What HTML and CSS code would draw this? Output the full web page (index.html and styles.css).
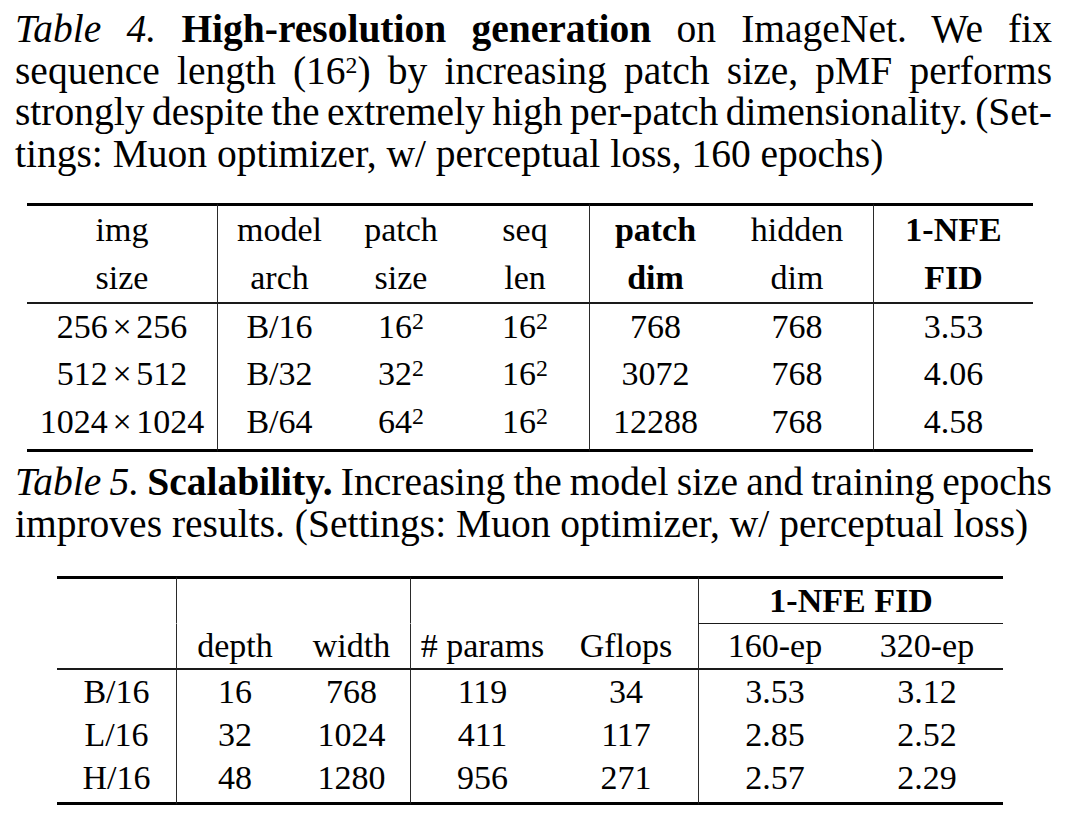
FILE: index.html
```html
<!DOCTYPE html>
<html lang="en">
<head>
<meta charset="utf-8">
<title>Tables 4 and 5</title>
<link rel="stylesheet" href="styles.css">
</head>
<body>
<div class="page">
  <p class="caption cap4">
    <span class="ln j"><i>Table 4.</i> <b>High-resolution generation</b> on ImageNet. We fix</span>
    <span class="ln j">sequence length (16<sup class="csup">2</sup>) by increasing patch size, pMF performs</span>
    <span class="ln j tight">strongly despite the extremely high per-patch dimensionality. (Set-</span>
    <span class="ln">tings: Muon optimizer, w/ perceptual loss, 160 epochs)</span>
  </p>

  <table class="tab t4">
    <colgroup>
      <col class="w190"><col class="w124"><col class="w120"><col class="w128"><col class="w132"><col class="w152"><col class="w160">
    </colgroup>
    <thead>
      <tr class="h1">
        <th>img</th><th class="vl">model</th><th>patch</th><th>seq</th><th class="vl bold">patch</th><th>hidden</th><th class="vl bold">1-NFE</th>
      </tr>
      <tr class="h2">
        <th>size</th><th class="vl">arch</th><th>size</th><th>len</th><th class="vl bold">dim</th><th>dim</th><th class="vl bold">FID</th>
      </tr>
    </thead>
    <tbody>
      <tr class="r1">
        <td>256<span class="x">×</span>256</td><td class="vl">B/16</td><td>16<sup class="tsup">2</sup></td><td>16<sup class="tsup">2</sup></td><td class="vl">768</td><td>768</td><td class="vl">3.53</td>
      </tr>
      <tr class="r2">
        <td>512<span class="x">×</span>512</td><td class="vl">B/32</td><td>32<sup class="tsup">2</sup></td><td>16<sup class="tsup">2</sup></td><td class="vl">3072</td><td>768</td><td class="vl">4.06</td>
      </tr>
      <tr class="r3">
        <td>1024<span class="x">×</span>1024</td><td class="vl">B/64</td><td>64<sup class="tsup">2</sup></td><td>16<sup class="tsup">2</sup></td><td class="vl">12288</td><td>768</td><td class="vl">4.58</td>
      </tr>
    </tbody>
  </table>

  <p class="caption cap5">
    <span class="ln j tight"><i>Table 5.</i> <b>Scalability.</b> Increasing the model size and training epochs</span>
    <span class="ln">improves results. (Settings: Muon optimizer, w/ perceptual loss)</span>
  </p>

  <table class="tab t5">
    <colgroup>
      <col class="w119"><col class="w117"><col class="w117"><col class="w144"><col class="w144"><col class="w153"><col class="w152">
    </colgroup>
    <thead>
      <tr class="h1">
        <th></th><th class="vl"></th><th></th><th class="vl"></th><th></th><th class="vl bold cmid" colspan="2">1-NFE FID</th>
      </tr>
      <tr class="h2">
        <th></th><th class="vl">depth</th><th>width</th><th class="vl"># params</th><th>Gflops</th><th class="vl">160-ep</th><th>320-ep</th>
      </tr>
    </thead>
    <tbody>
      <tr class="r1">
        <td>B/16</td><td class="vl">16</td><td>768</td><td class="vl">119</td><td>34</td><td class="vl">3.53</td><td>3.12</td>
      </tr>
      <tr class="r2">
        <td>L/16</td><td class="vl">32</td><td>1024</td><td class="vl">411</td><td>117</td><td class="vl">2.85</td><td>2.52</td>
      </tr>
      <tr class="r3">
        <td>H/16</td><td class="vl">48</td><td>1280</td><td class="vl">956</td><td>271</td><td class="vl">2.57</td><td>2.29</td>
      </tr>
    </tbody>
  </table>
</div>
</body>
</html>
```

FILE: styles.css
```css
html, body {
  margin: 0;
  padding: 0;
  background: #ffffff;
}

body {
  color: #000000;
  font-family: "Liberation Serif", "Times New Roman", Times, serif;
}

.page {
  padding: 9px 0 0 15px;
  width: 1037px;
}

/* ---------- captions ---------- */
.caption {
  margin: 0;
  font-size: 39.5px;
  line-height: 41.5px;
}

.ln {
  display: block;
}

.j {
  text-align: justify;
  text-align-last: justify;
}

.tight {
  word-spacing: -0.11em;
}

.caption b {
  font-weight: bold;
}

.csup {
  font-size: 0.6em;
  vertical-align: 0.46em;
  line-height: 0;
}

.cap5 {
  margin-top: 9px;
  line-height: 42px;
}

/* ---------- tables ---------- */
.tab {
  border-collapse: separate;
  border-spacing: 0;
  table-layout: fixed;
  font-size: 34px;
}

.tab th,
.tab td {
  padding: 0;
  text-align: center;
  vertical-align: middle;
  font-weight: normal;
  white-space: nowrap;
}

.tab .bold {
  font-weight: bold;
}

.tab .vl {
  border-left: 1px solid #2a2a2a;
}

.tab thead tr.h1 th {
  border-top: 3px solid #000;
}

.tab tbody tr.r3 td {
  border-bottom: 3px solid #000;
}

.tsup {
  font-size: 0.7em;
  vertical-align: 0.36em;
  line-height: 0;
}

.x {
  margin: 0 0.14em;
}

/* table 4 */
.t4 {
  margin: 28px 0 0 12px;
  width: 1006px;
}

.t4 .h1 th { line-height: 47px; }
.t4 .h2 th { line-height: 49px; border-bottom: 2px solid #1a1a1a; }
.t4 .r1 td { line-height: 46px; }
.t4 .r2 td { line-height: 48px; }
.t4 .r3 td { line-height: 48px; padding-bottom: 3px; }

.w190 { width: 190px; }
.w124 { width: 124px; }
.w120 { width: 120px; }
.w128 { width: 128px; }
.w132 { width: 132px; }
.w152 { width: 152px; }
.w160 { width: 160px; }

/* table 5 */
.t5 {
  margin: 31px 0 0 42px;
  width: 946px;
}

.t5 .h1 th { line-height: 44px; border-bottom: 1px solid transparent; }
.t5 .h1 th.cmid { border-bottom: 1px solid #1a1a1a; }
.t5 .h2 th { line-height: 44px; border-bottom: 2px solid #1a1a1a; }
.t5 .r1 td { line-height: 43px; }
.t5 .r2 td { line-height: 43px; }
.t5 .r3 td { line-height: 43px; padding-bottom: 3px; }

.w119 { width: 119px; }
.w117 { width: 117px; }
.w144 { width: 144px; }
.w153 { width: 153px; }
```
